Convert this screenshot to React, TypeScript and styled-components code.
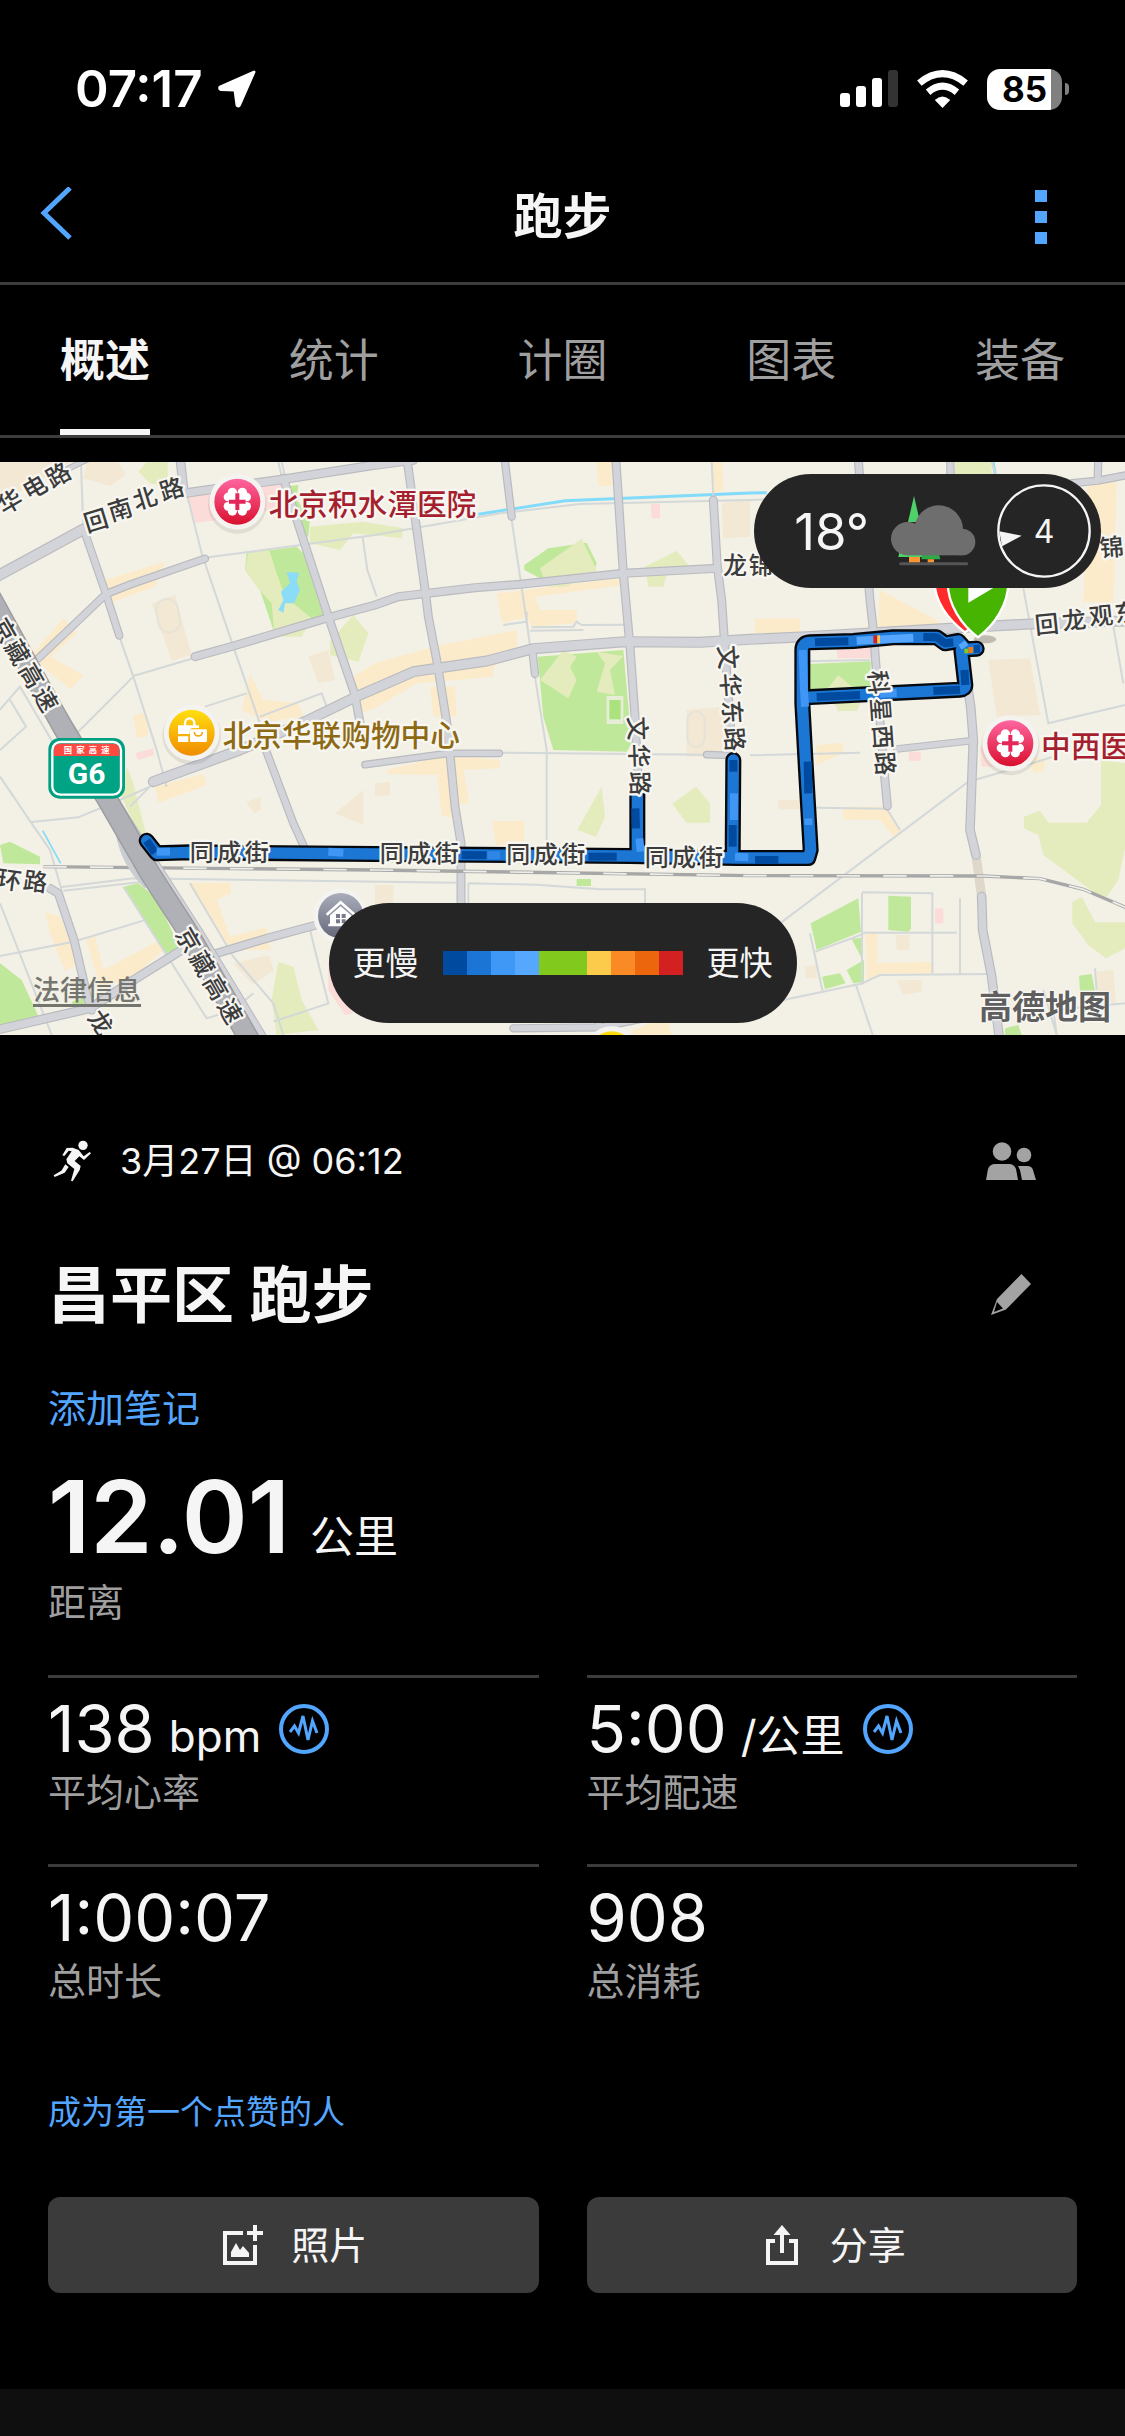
import React from "react";
import styled, { createGlobalStyle } from "styled-components";

const GlobalStyle = createGlobalStyle`
  *, *::before, *::after { box-sizing: border-box; }
  body {
    margin: 0;
    background: #000;
    color: #f5f5f5;
    font-family: Inter, "Noto Sans CJK SC", sans-serif;
  }
  button { font: inherit; color: inherit; background: none; border: 0; padding: 0; cursor: pointer; }
  h1, h2, p, dl, dt, dd { margin: 0; font-weight: inherit; }
  svg { display: block; flex: none; }
`;

const blue = "#53a6ff";
const line = "#3c3c3c";
const muted = "#9f9f9f";

const Page = styled.div`
  min-height: 100vh;
  display: flex;
  flex-direction: column;
`;

/* ---------- status bar ---------- */
const StatusBar = styled.div`
  height: 150px;
  padding: 57px 56px 29px 75px;
  display: flex;
  align-items: center;
  justify-content: space-between;
  color: #fff;
`;
const StatusGroup = styled.div<{ $gap: number }>`
  display: flex;
  align-items: center;
  gap: ${(p) => p.$gap}px;
`;
const Clock = styled.span`
  font-size: 51px;
  font-weight: 600;
  line-height: 64px;
`;
const Battery = styled.span`
  display: flex;
  align-items: center;
  gap: 3px;
  &::after {
    content: "";
    width: 4px;
    height: 12px;
    border-radius: 0 6px 6px 0;
    background: #808080;
  }
`;
const BatteryBody = styled.span<{ $level: number }>`
  width: 75px;
  height: 41px;
  border-radius: 13px;
  background: linear-gradient(90deg, #fff ${(p) => p.$level}%, #808080 ${(p) => p.$level}%);
  color: #000;
  font-size: 35px;
  font-weight: 700;
  line-height: 41px;
  text-align: center;
`;

/* ---------- header and tabs ---------- */
const Header = styled.header`
  display: grid;
  grid-template-columns: 168px 1fr 168px;
  height: 135px;
  border-bottom: 3px solid ${line};
`;
const HeaderButton = styled.button<{ $width: number }>`
  width: ${(p) => p.$width}px;
  display: flex;
  align-items: center;
  justify-content: center;
`;
const HeaderTitle = styled.h1`
  font-size: 49px;
  font-weight: 600;
  line-height: 134px;
  text-align: center;
`;
const Tabs = styled.nav`
  display: flex;
  justify-content: space-between;
  padding: 0 60px;
  margin-bottom: 24px;
  border-bottom: 3px solid ${line};
`;
const Tab = styled.button<{ $active: boolean }>`
  height: 150px;
  padding-top: 2px;
  font-size: 45px;
  line-height: 148px;
  font-weight: ${(p) => (p.$active ? 600 : 400)};
  color: ${(p) => (p.$active ? "#f5f5f5" : muted)};
  box-shadow: ${(p) => (p.$active ? "inset 0 -6px #f5f5f5" : "none")};
`;

/* ---------- map ---------- */
const MapFrame = styled.section`
  position: relative;
  aspect-ratio: 1125 / 573;
  overflow: hidden;
`;
const MapCanvas = styled.svg`
  width: 100%;
  height: 100%;
`;
const WeatherPill = styled.div`
  position: absolute;
  top: 12px;
  right: 24px;
  height: 114px;
  padding: 0 10px 0 40px;
  border-radius: 57px;
  background: #252525;
  display: flex;
  align-items: center;
  gap: 21px;
`;
const Temperature = styled.span`
  font-size: 51px;
`;
const Wind = styled.span`
  display: grid;
  place-items: center;
  font-size: 32px;
  > * { grid-area: 1 / 1; }
`;
const LegendPill = styled.div`
  position: absolute;
  bottom: 12px;
  left: 50%;
  transform: translateX(-50%);
  height: 120px;
  padding: 0 24px;
  border-radius: 60px;
  background: #252525;
  display: flex;
  align-items: center;
  gap: 24px;
  font-size: 33px;
  line-height: 48px;
  white-space: nowrap;
`;
const LegendScale = styled.span`
  display: flex;
`;
const LegendStep = styled.span<{ $color: string }>`
  width: 24px;
  height: 24px;
  background: ${(p) => p.$color};
`;
const LegalLink = styled.a`
  position: absolute;
  left: 33px;
  bottom: 24px;
  font-size: 27px;
  font-weight: 500;
  line-height: 40px;
  color: #75756f;
  text-decoration: underline;
  text-decoration-thickness: 3px;
  text-underline-offset: 4px;
`;
const MapBrand = styled.span`
  position: absolute;
  right: 14px;
  bottom: 8px;
  font-size: 33px;
  line-height: 40px;
  font-weight: 700;
  color: #5f5f5f;
  text-shadow: 0 0 3px #fff, 0 0 3px #fff;
`;

/* ---------- activity details ---------- */
const Details = styled.main`
  padding: 81px 48px 96px;
`;
const InfoRow = styled.div`
  display: flex;
  align-items: center;
  justify-content: space-between;
  height: 90px;
`;
const DateText = styled.p`
  display: flex;
  align-items: center;
  gap: 26px;
  padding-left: 4px;
  font-size: 36px;
  line-height: 48px;
`;
const IconButton = styled.button`
  width: 132px;
  height: 90px;
  display: grid;
  place-items: center;
`;
const TitleRow = styled(InfoRow)`
  margin: 45px 0 43px;
`;
const ActivityName = styled.h2`
  font-size: 62px;
  font-weight: 600;
  line-height: 90px;
`;
const TextLink = styled.a<{ $size: number }>`
  display: block;
  width: fit-content;
  font-size: ${(p) => p.$size}px;
  line-height: 48px;
  color: ${blue};
  text-decoration: none;
`;
const Distance = styled.div`
  margin: 25px 0 48px;
`;
const Value = styled.dd<{ $large?: boolean }>`
  display: flex;
  align-items: center;
  gap: 18px;
  font-size: ${(p) => (p.$large ? 100 : 65)}px;
  font-weight: ${(p) => (p.$large ? 600 : 400)};
  line-height: ${(p) => (p.$large ? 120 : 76)}px;
`;
const Reading = styled.span<{ $gap: number }>`
  display: flex;
  align-items: baseline;
  gap: ${(p) => p.$gap}px;
`;
const Unit = styled.span`
  font-size: 44px;
  font-weight: 400;
  line-height: 60px;
`;
const Caption = styled.dt`
  font-size: 38px;
  line-height: 50px;
  color: ${muted};
`;
const Metrics = styled.div`
  display: grid;
  grid-template-columns: 1fr 1fr;
  column-gap: 48px;
`;
const Metric = styled.dl<{ $ruled?: boolean }>`
  display: flex;
  flex-direction: column-reverse;
  justify-content: flex-end;
  height: ${(p) => (p.$ruled ? "189px" : "auto")};
  padding-top: ${(p) => (p.$ruled ? 13 : 0)}px;
  border-top: ${(p) => (p.$ruled ? `3px solid ${line}` : "0")};
`;
const Actions = styled.div`
  display: grid;
  grid-template-columns: 1fr 1fr;
  column-gap: 48px;
  margin-top: 61px;
`;
const ActionButton = styled.button`
  height: 96px;
  border-radius: 12px;
  background: #3b3b3b;
  display: flex;
  align-items: center;
  justify-content: center;
  gap: 24px;
  font-size: 38px;
  line-height: 48px;
`;
const ActionIcon = styled.span`
  width: 48px;
  display: grid;
  place-items: center;
`;
const Likes = styled.div`
  margin-top: 35px;
`;
const Footer = styled.footer`
  flex: 1;
  min-height: 47px;
  background: #0f0f0f;
`;

/* ---------- icons ---------- */
const LocationIcon = () => (
  <svg width="40" height="40" viewBox="0 0 40 40" fill="#fff" stroke="#fff" strokeWidth="3" strokeLinejoin="round">
    <path d="M37 3 L3 18 Q2 20 4 20.500 L18 21 L20 36 Q21 38 22.500 36Z" />
  </svg>
);
const SignalIcon = () => (
  <svg width="58" height="38" viewBox="0 0 58 38" fill="#fff">
    <rect x="0" y="23" width="10" height="14" rx="3" />
    <rect x="16" y="16" width="10" height="21" rx="3" />
    <rect x="32" y="8" width="10" height="29" rx="3" />
    <rect x="48" y="0" width="10" height="37" rx="3" fill="#333" />
  </svg>
);
const WifiIcon = () => (
  <svg width="51" height="38" viewBox="276 44 152 113" fill="none" stroke="#fff" strokeWidth="21">
    <path d="M283 83 Q352 27 421 83" />
    <path d="M309 110 Q352 74 395 110" />
    <path d="M352 157 L329 133 Q352 112 375 133Z" fill="#fff" stroke="none" />
  </svg>
);
const BackIcon = () => (
  <svg width="32" height="60" viewBox="0 0 32 60" fill="none" stroke={blue} strokeWidth="5">
    <path d="M30 1 L4 26 L30 51" />
  </svg>
);
const MoreIcon = () => (
  <svg width="12" height="54" viewBox="0 0 12 54" fill={blue}>
    <path d="M0 0h12v12H0zM0 21h12v12H0zM0 42h12v12H0z" />
  </svg>
);
const RunnerIcon = () => (
  <svg width="42" height="45" viewBox="38 43 126 135" fill="#f5f5f5">
    <circle cx="131" cy="62" r="14" />
    <path d="M69 92 L82 70 L100 69 L118 76 L133 95 L151 82 L155 86 L134 106 L120 95 L106 109 L124 124 L121 136 L100 170 L95 168 L105 133 L84 116 L81 104 L97 80 L88 78 L75 94Z" />
    <path d="M78 119 L88 127 L76 144 L46 157 L43 152 L66 138Z" />
  </svg>
);
const PeopleIcon = () => (
  <svg width="50" height="38" viewBox="0 0 50 38" fill="#a3a3a3">
    <circle cx="16" cy="9.500" r="9.300" />
    <circle cx="38" cy="13" r="7.300" />
    <path d="M0 38 L2 27 Q4 22 9 22 H23 Q28 22 30 27 L32 38Z" />
    <path d="M32 24 H41 Q46 24 47 28 L50 38 H36 L34 28Z" />
  </svg>
);
const PencilIcon = () => (
  <svg width="40" height="44" viewBox="0 0 40 44" fill="#a3a3a3" fillRule="evenodd">
    <path d="M30.500 0 L40 10 L15 35.500 L0 41 L6 25Z M6 28 L3 38 L12 34.500Z" />
  </svg>
);
const PulseIcon = () => (
  <svg width="50" height="50" viewBox="0 0 50 50" fill="none" stroke={blue}>
    <circle cx="25" cy="25" r="23" strokeWidth="4" />
    <path d="M11 28 L15.500 22 L19.500 29 L24 12 L29 36 L33.500 17 L38 29" strokeWidth="3" />
  </svg>
);
const PhotoIcon = () => (
  <svg width="40" height="40" viewBox="0 0 40 40" fill="none" stroke="#f5f5f5" strokeWidth="4">
    <path d="M20 8 H2 V38 H32 V20 M24 8 H40 M32 0 V16" />
    <path d="M8 32 V27 L13 18 L17 25 L20 21 L26 28 V32Z" fill="#f5f5f5" stroke="none" />
  </svg>
);
const ShareIcon = () => (
  <svg width="32" height="40" viewBox="0 0 32 40" fill="none" stroke="#f5f5f5" strokeWidth="4">
    <path d="M9 16 H2 V38 H30 V16 H23 M16 28 V6" />
    <path d="M16 0 L24.500 10 H7.500Z" fill="#f5f5f5" stroke="none" />
  </svg>
);
const CloudIcon = () => (
  <svg width="86" height="74" viewBox="420 134 258 222">
    <path d="M492 140 L510 218 H474Z" fill="#4fd16a" />
    <path d="M450 300 L445 323 H542 L530 300Z" fill="#4fd16a" />
    <path d="M518 306 L514 330 H571 L565 306Z" fill="#2fa84a" />
    <path d="M477 323h33v17h-33zM533 330h19v10h-19z" fill="#ff9432" />
    <path d="M452 343 H650" stroke="#555" strokeWidth="9" strokeLinecap="round" />
    <g fill="#6e6e6e">
      <circle cx="473" cy="268" r="50" />
      <circle cx="566" cy="241" r="73" />
      <circle cx="636" cy="278" r="40" />
      <rect x="472" y="250" width="164" height="68" />
    </g>
  </svg>
);
const WindDial = () => (
  <svg width="94" height="94" viewBox="741 102 282 282" fill="none">
    <circle cx="882" cy="243" r="137" stroke="#f5f5f5" strokeWidth="7" />
    <path d="M748 244 L815 257 L756 289Z" fill="#f5f5f5" />
  </svg>
);

/* ---------- map data ---------- */
type Road = [d: string, width: number];

const roads: Road[] = [
  ["M540 20 L552 130 L850 88 L1125 45 L1240 30", 24],
  ["M200 58 L262 28", 14],
  ["M-20 385 L250 238", 30],
  ["M250 235 L318 432 L358 557", 20],
  ["M115 625 L205 540 L318 432 L395 402 L615 326", 20],
  ["M850 85 L985 500 L1065 735 L1082 830", 22],
  ["M585 620 L700 588 L985 503 L1125 465 L1195 440 L1425 413 L1560 403 L1870 370 L2150 355", 22],
  ["M460 995 L720 900 L915 815 L1065 742 L1240 665 L1460 633 L1600 596 L1875 575 L2100 577 L2250 568 L2420 560 L2900 532 L3090 522 L3400 512", 28],
  ["M1220 20 L1278 440 L1285 500 L1312 640 L1342 830 L1365 1070 L1383 1180 L1383 1380", 22],
  ["M1095 944 L1345 910 L1498 910", 18],
  ["M1513 20 L1535 200", 20],
  ["M1597 600 L1605 672", 20],
  ["M1847 20 L1870 370 L1890 590 L1905 800 L1915 1000", 22],
  ["M2140 150 L2152 350 L2165 450 L2175 600 L2195 880", 22],
  ["M790 880 L880 1120 L912 1190", 20],
  ["M2120 914 L2190 916", 18],
  ["M2574 20 L2610 450 L2620 540 L2645 880 L2662 1068", 22],
  ["M2850 20 L2852 80", 20],
  ["M3295 20 L3293 92 M3060 115 L3293 92 L3400 72", 20],
  ["M2885 590 L2912 770 L2920 870 L2910 1140 L2928 1215", 24],
  ["M2945 1340 L2948 1440 L2975 1580 L3000 1780", 24],
  ["M2690 897 L2905 873", 18],
  ["M-20 1742 L270 1675 L420 1578 L545 1500", 24],
  ["M650 1510 L800 1465 L960 1422", 22],
  ["M150 1315 L175 1330 L222 1470 L262 1640 L275 1680", 22],
  ["M1540 1735 L1800 1732 L1930 1705 M1795 1690 V1732", 20],
];

const lanes = [
  "M243 40 L250 240 M560 130 L605 310 L700 590 L790 850",
  "M625 322 L1125 255 L1500 190 L1740 162 L2250 150 L2400 144",
  "M358 560 L400 680 L470 900 L500 1010 M400 678 L580 625 M400 680 L230 850",
  "M835 36 L848 90 M845 36 L858 90 M1088 262 L1102 360 L1130 440",
  "M1535 210 L1575 480 L1592 600 L1640 900 V1180",
  "M1510 525 L1580 515 V485 M1595 532 L1720 530 L1730 515 L1745 525 L1880 524 M1590 542 L1750 540",
  "M-10 790 L60 710 L160 880 M30 750 L78 830 L0 900",
  "M0 980 L95 1120 L150 1200 L185 1320 M95 1116 L235 1102 L360 1050 L450 1010 L390 1070",
  "M180 1312 L400 1285 L1370 1298 M190 1322 L430 1295",
  "M0 1518 L220 1475 L430 1412 M0 1360 L155 1755 M370 1310 L620 1705 L700 1680 L760 1630",
  "M570 1300 L700 1520 L820 1660 L850 1755 M820 1715 L985 1660 L930 1440",
  "M1500 908 L2120 914 M1405 1300 L1610 1304 L1800 1318 H1935 V1370 M1405 1300 V1360",
  "M2250 916 L2580 908 M2450 1073 L2660 1076 L2700 1140",
  "M2340 1420 L2905 995 L3080 945 L3160 920",
  "M2586 1330 V1600 L2640 1575 L2960 1572 M2586 1327 L2797 1330 V1570 M2590 1448 H2870 M2880 1345 V1570",
  "M2350 1650 L2590 1600 M2430 1450 L2468 1625 M2446 1505 L2590 1452 M2568 1605 L2618 1755",
  "M3070 415 L3145 820 L3375 765 M3340 530 L3370 700 M3285 1555 L3290 1620 M3130 1620 L3170 1755 L3160 1680 L3375 1660",
  "M2422 634 L2610 630 M2975 36 L3005 130 M2135 36 L2140 140 M615 770 L740 730 M780 800 L965 730 L980 770",
];

type Area = [d: string, color: string];
const sand = "#fcebcb";
const tan = "#f3e8d3";
const grass = "#c0e89a";
const meadow = "#e4ecbd";
const rose = "#fcdcd8";

const areas: Area[] = [
  ["M0 36 H210 L120 90 L0 160Z", tan],
  ["M260 36 H355 L378 75 L330 108 L250 85Z", tan],
  ["M440 36 H503 V110 L450 100 L415 65Z", meadow],
  ["M560 140 L840 95 L860 170 L700 205 L585 218Z", rose],
  ["M870 108 L895 105 L890 150 L930 200 L925 262 L890 230Z", grass],
  ["M930 230 L1090 215 L1210 235 L1205 265 L1060 250 L1020 300 L930 280Z", meadow],
  ["M740 310 L890 290 L910 310 L970 495 L820 540 L780 420 L735 360Z", grass],
  ["M745 308 L808 302 L830 370 L855 440 L935 505 L905 560 L850 560 L822 540 L815 460 L770 410 L735 360Z", meadow],
  ["M1060 495 L1105 550 L1075 635 L990 615 V575Z", meadow],
  ["M315 390 L495 335 L465 410 L340 455Z", sand],
  ["M190 505 L230 550 L150 620 L250 675 L212 718 L130 650 L100 610Z", sand],
  ["M455 460 L525 435 L575 615 L515 632Z", tan],
  ["M925 620 L985 600 L1005 690 L955 700Z", tan],
  ["M1060 680 L1125 640 L1300 590 L1550 540 V600 L1480 650 V680 L1250 700 L1125 775 L1080 790Z", sand],
  ["M725 780 L750 672 L790 750 L895 760 L910 800 L800 815Z", sand],
  ["M400 795 L440 790 L445 855 L410 865Z", sand],
  ["M1490 430 L1860 385 L1870 405 L1605 440 L1620 480 H1730 V520 L1595 530 L1580 500 L1505 520Z", sand],
  ["M1290 710 H1365 L1370 800 L1300 800Z", sand],
  ["M1790 36 H1835 V108 H1795Z", sand],
  ["M2135 36 H2167 L2170 120 L2140 130Z", sand],
  ["M2165 160 L2250 150 V260 L2170 265Z", tan],
  ["M1645 295 L1760 278 L1790 340 L1780 370 L1620 385 L1573 360 V345Z", grass],
  ["M1620 355 L1745 266 L1790 360 L1700 410 L1640 410Z", meadow],
  ["M1935 350 L2030 303 L2065 345 L2000 375 L1990 410 H1945Z", meadow],
  ["M1952 162 H1980 V205 H1955Z", rose],
  ["M1613 620 L1870 600 L1895 880 L1880 905 L1660 900 L1630 800Z", grass],
  ["M1690 600 L1730 620 L1710 650 L1730 690 L1705 745 L1620 690Z", meadow],
  ["M1790 605 L1870 618 L1830 660 L1845 735 L1790 725 L1815 640Z", meadow],
  ["M1820 738 H1870 V822 H1820Z", "#e8edd8"],
  ["M1828 750 H1862 V808 H1828Z", "#aae37e"],
  ["M2060 780 L2180 770 V920 H2060Z", tan],
  ["M2865 36 H2975 V105 H2865Z", meadow],
  ["M3260 95 H3350 L3340 460 L3250 455 L3260 250Z", sand],
  ["M2640 420 L2800 505 L2830 525 L2632 540Z", sand],
  ["M2265 505 H2400 V550 H2265Z", sand],
  ["M2510 595 L2612 585 L2615 625 H2513Z", rose],
  ["M2425 642 L2612 634 V720 H2425Z", grass],
  ["M2515 675 L2590 740 L2570 783 H2515 L2480 720Z", meadow],
  ["M2965 630 L3090 625 L3120 795 L2990 800Z", tan],
  ["M2940 890 H3000 V950 H2945Z", rose],
  ["M3090 920 L3135 930 L3130 965 L3100 970Z", sand],
  ["M365 1040 L380 950 L400 1000 L440 1160 L420 1160Z", meadow],
  ["M465 1010 L610 972 L620 1005 L475 1058Z", sand],
  ["M405 910 L460 895 L462 915 L415 930Z", rose],
  ["M738 1055 L782 1042 V1080 L762 1090Z", tan],
  ["M1005 1090 L1090 1020 V1125Z", tan],
  ["M1160 960 L1345 915 L1500 930 V955 L1390 960 L1408 1060 H1382 L1360 1105 L1325 1095 L1312 975 L1165 972Z", sand],
  ["M1477 1113 H1572 V1185 H1487Z", sand],
  ["M1125 1000 L1170 995 V1035 L1125 1040Z", tan],
  ["M1805 1010 L1815 1100 L1788 1160 L1732 1140Z", meadow],
  ["M2088 1010 L2130 1060 V1118 H2060 L2017 1062Z", meadow],
  ["M1730 1287 H1773 V1308 H1730Z", grass],
  ["M2450 885 L2530 878 V910 L2450 945Z", sand],
  ["M2530 1070 H2660 L2700 1140 L2685 1165 L2640 1110 L2530 1108Z", sand],
  ["M2335 1050 H2400 V1078 H2335Z", tan],
  ["M2725 905 H2762 V932 H2727Z", rose],
  ["M3303 930 L3375 940 V1195 L3355 1290 L3320 1340 L3285 1330 L3130 1215 L3115 1155 L3072 1135 V1100 L3120 1082 L3145 1118 H3260 L3303 1065Z", meadow],
  ["M3245 1340 L3285 1417 H3375 V1495 L3318 1525 L3265 1485 L3217 1420 V1357Z", meadow],
  ["M2432 1420 L2575 1345 L2583 1445 L2450 1500Z", grass],
  ["M2665 1337 L2733 1340 V1435 L2725 1445 L2665 1440Z", grass],
  ["M2555 1467 L2585 1463 V1525Z M2466 1580 L2520 1570 L2537 1600 L2475 1618Z M2540 1560 L2592 1530 V1595 L2560 1600Z", grass],
  ["M2597 1450 H2632 V1540 L2800 1535 V1570 H2650 L2600 1595Z", sand],
  ["M2805 1375 H2830 V1420 H2805Z", rose],
  ["M2415 1550 L2450 1545 V1585 H2418Z M2688 1455 H2728 V1500 H2690Z M2690 1590 H2765 V1625 L2710 1635Z", tan],
  ["M3237 1577 L3275 1572 L3285 1622 H3240Z M3015 1735 L3055 1725 L3065 1755 H3015Z", grass],
  ["M3290 1565 L3340 1560 L3348 1660 L3295 1655Z", tan],
  ["M0 1185 L30 1175 L120 1220 V1243 L10 1240Z", grass],
  ["M0 1540 L65 1590 L118 1705 L0 1730Z", grass],
  ["M372 1310 L415 1300 L470 1345 L540 1495 L495 1512Z", grass],
  ["M215 1655 L260 1640 L250 1680 H225Z", grass],
  ["M135 1385 L180 1400 L235 1540 L195 1562 L150 1450Z", sand],
  ["M258 1468 L285 1460 L310 1560 L470 1475 L490 1500 L400 1580 L300 1610Z", sand],
  ["M565 1298 H693 V1330 L650 1350 L690 1460 L800 1432 L812 1500 L690 1500Z", sand],
  ["M700 1540 L805 1515 L822 1560 L760 1605Z", tan],
  ["M835 1535 L880 1550 L905 1650 L955 1740 L830 1755 L815 1650Z", meadow],
  ["M985 1540 H1020 L1060 1690 L1035 1695 L985 1620Z", rose],
  ["M1125 1305 H1180 V1365 H1125Z", tan],
  ["M1900 1740 L2000 1700 L2015 1755 H1890Z", sand],
];

type Label = { text: string; at: [number, number][]; angle: number };
const labels: Label[] = [
  { text: "华电路", at: [[30, 155], [105, 112], [175, 75]], angle: -30 },
  { text: "回南北路", at: [[288, 212], [360, 178], [435, 145], [515, 118]], angle: -17 },
  { text: "京藏高速", at: [[12, 542], [52, 607], [95, 677], [137, 748]], angle: 60 },
  { text: "京藏高速", at: [[565, 1470], [606, 1541], [648, 1613], [690, 1684]], angle: 60 },
  { text: "龙", at: [[302, 1718]], angle: 55 },
  { text: "环路", at: [[28, 1290], [106, 1295]], angle: 8 },
  { text: "同成街", at: [[605, 1207], [688, 1207], [770, 1207]], angle: 0 },
  { text: "同成街", at: [[1175, 1211], [1257, 1211], [1340, 1211]], angle: 0 },
  { text: "同成街", at: [[1555, 1214], [1637, 1214], [1720, 1214]], angle: 0 },
  { text: "同成街", at: [[1970, 1221], [2052, 1221], [2133, 1221]], angle: 0 },
  { text: "文华路", at: [[1912, 835], [1917, 917], [1920, 1000]], angle: 88 },
  { text: "文华东路", at: [[2183, 622], [2191, 705], [2197, 787], [2203, 867]], angle: 86 },
  { text: "科星西路", at: [[2635, 697], [2642, 780], [2648, 860], [2655, 940]], angle: 86 },
  { text: "回龙观东", at: [[3140, 523], [3222, 510], [3303, 498], [3380, 488]], angle: -6 },
  { text: "龙锦", at: [[2205, 345], [2282, 345]], angle: 0 },
  { text: "锦", at: [[3335, 292]], angle: -5 },
];

/* Glyph centres are projected onto the label's own rotated baseline. */
const RoadLabel = ({ text, at, angle }: Label) => {
  const [ox, oy] = at[0];
  const rad = (angle * Math.PI) / 180;
  const xs = at.map(([x, y]) => Math.round((x - ox) * Math.cos(rad) + (y - oy) * Math.sin(rad)));
  const ys = at.map(([x, y]) => Math.round((y - oy) * Math.cos(rad) - (x - ox) * Math.sin(rad)) + 26);
  return (
    <text transform={`translate(${ox} ${oy}) rotate(${angle})`} x={xs.join(" ")} y={ys.join(" ")} textAnchor="middle">
      {text}
    </text>
  );
};

const Hospital = ({ x, y }: { x: number; y: number }) => (
  <g transform={`translate(${x} ${y})`}>
    <circle cy="8" r="88" fill="#000" opacity="0.08" />
    <circle r="84" fill="#f5f3ef" />
    <circle r="69" fill="url(#pink)" />
    <g fill="#fff">
      <circle cx="-15" cy="-28" r="14" />
      <circle cx="15" cy="-28" r="14" />
      <circle cx="-15" cy="28" r="14" />
      <circle cx="15" cy="28" r="14" />
      <circle cx="-28" cy="-14" r="13" />
      <circle cx="-28" cy="14" r="13" />
      <circle cx="28" cy="-14" r="13" />
      <circle cx="28" cy="14" r="13" />
      <rect x="-26" y="-26" width="52" height="52" />
    </g>
    <path d="M-6 -25h12v19h19v12h-19v19h-12v-19h-19v-12h19z" fill="#e5265a" />
  </g>
);

const route = [
  "M440 1172 L470 1210 L570 1207 L1125 1212 L1890 1218 L2210 1224 L2425 1224 L2432 1200 L2418 960 L2407 760 V600 Q2407 578 2430 577 L2560 573 L2680 562 L2810 562 L2835 580 L2875 573 L2897 598 L2930 596",
  "M2884 600 L2896 705 Q2896 718 2880 719 L2415 742",
  "M1912 1020 V1215",
  "M2200 930 L2198 1215",
];
const pace: [d: string, color: string][] = [
  ["M440 1172 L465 1208", "#004b9f"],
  ["M470 1205 L510 1205", "#3f96f4"],
  ["M985 1205 L1030 1208", "#3f96f4"],
  ["M1385 1215 L1460 1216", "#004b9f"],
  ["M1462 1216 L1500 1216", "#2f86e6"],
  ["M1765 1220 L1850 1220", "#004b9f"],
  ["M1906 1075 L1908 1135", "#004b9f"],
  ["M1918 1165 L1922 1205", "#3f96f4"],
  ["M2198 1125 L2198 1190", "#004b9f"],
  ["M2202 1030 L2202 1110", "#3f96f4"],
  ["M2200 930 L2200 965", "#004b9f"],
  ["M2205 1220 L2245 1222", "#3f96f4"],
  ["M2265 1230 L2335 1230", "#004b9f"],
  ["M2425 1105 L2425 1125", "#3f96f4"],
  ["M2423 935 L2425 1030", "#004b9f"],
  ["M2415 770 L2412 720 L2408 600", "#3f96f4"],
  ["M2445 577 L2545 574", "#004b9f"],
  ["M2570 572 L2740 563", "#56a6ff"],
  ["M2770 561 L2810 562 L2835 580 L2860 577", "#004b9f"],
  ["M2450 741 L2580 735", "#004b9f"],
  ["M2640 731 L2690 729", "#3f96f4"],
  ["M2800 723 L2880 719", "#004b9f"],
  ["M2893 660 L2896 705", "#004b9f"],
  ["M2885 578 L2895 592", "#56a6ff"],
  ["M2922 597 L2940 596", "#004b9f"],
];

const ActivityMap = () => (
  <MapCanvas viewBox="0 36 3375 1719" preserveAspectRatio="xMidYMid slice" role="img" aria-label="跑步路线">
    <defs>
      <linearGradient id="pink" x2="0" y2="1">
        <stop stopColor="#ff65a0" />
        <stop offset="1" stopColor="#d9102e" />
      </linearGradient>
      <linearGradient id="amber" x2="0" y2="1">
        <stop stopColor="#ffdf10" />
        <stop offset="1" stopColor="#f08c00" />
      </linearGradient>
      <linearGradient id="slate" x2="0" y2="1">
        <stop stopColor="#a9adbb" />
        <stop offset="1" stopColor="#656979" />
      </linearGradient>
    </defs>
    <rect y="36" width="3375" height="1719" fill="#f3f0e5" />
    {areas.map(([d, color]) => (
      <path key={d} d={d} fill={color} />
    ))}
    <path d="M860 366 L897 368 L890 395 L900 420 L882 460 L855 460 L850 488 L835 480 L850 450 L843 425 L870 400Z" fill="#8adcf7" />
    <g fill="none" stroke="#82dbfa" strokeWidth="9">
      <path d="M1435 193 L1695 152 L2250 129 L2300 128" />
      <path d="M128 1142 L182 1240" strokeWidth="5" />
      <path d="M2978 30 L2986 75" />
    </g>
    <g fill="none" stroke="#e6e3d8" strokeWidth="6">
      <rect x="472" y="447" width="65" height="100" rx="32" transform="rotate(-10 505 497)" />
      <rect x="2062" y="785" width="52" height="105" rx="26" />
    </g>
    <g fill="none" stroke="#d3d8d8" strokeWidth="6">
      {lanes.map((d) => (
        <path key={d} d={d} />
      ))}
    </g>
    <path d="M2928 1215 L2945 1340" stroke="#ded7ca" strokeWidth="28" />
    <g fill="none" strokeLinecap="round" strokeLinejoin="round">
      {roads.map(([d, w]) => (
        <path key={d} d={d} stroke="#b9bbbf" strokeWidth={w + 5} />
      ))}
      {roads.map(([d, w]) => (
        <path key={d} d={d} stroke="#d2d4d9" strokeWidth={w - 2} />
      ))}
    </g>
    <g fill="none">
      <path d="M130 1250 L1125 1260 L2250 1277 L2950 1278 L3120 1286 L3250 1318 L3400 1382" stroke="#a7a7a7" strokeWidth="10" />
      <path d="M130 1250 L1125 1260 L2250 1277 L2950 1278 L3120 1286 L3250 1318 L3400 1382" stroke="#eeeeea" strokeWidth="5" strokeDasharray="70 70" />
      <path d="M-30 430 L340 1045 L600 1450 L800 1780" stroke="#b9bbbf" strokeWidth="26" />
      <path d="M-30 430 L340 1045 L600 1450 L800 1780" stroke="#d2d4d9" strokeWidth="20" />
      <path d="M355 1150 Q370 1240 440 1310" stroke="#c9ccd1" strokeWidth="16" />
      <path d="M-40 420 L190 835 L320 1045 L450 1270 L560 1440 L760 1790" stroke="#9a9b9f" strokeWidth="64" />
      <path d="M-40 420 L190 835 L320 1045 L450 1270 L560 1440 L760 1790" stroke="#b0b1b6" strokeWidth="56" />
    </g>
    <g fill="none" stroke="#05080d" strokeWidth="48" strokeLinecap="round" strokeLinejoin="round">
      {route.map((d) => (
        <path key={d} d={d} />
      ))}
    </g>
    <g fill="none" stroke="#1b76d4" strokeWidth="34" strokeLinecap="round" strokeLinejoin="round">
      {route.map((d) => (
        <path key={d} d={d} />
      ))}
    </g>
    <g fill="none" strokeWidth="24" strokeLinejoin="round">
      {pace.map(([d, color]) => (
        <path key={d} d={d} stroke={color} />
      ))}
      <path d="M2620 568 h12" stroke="#d42020" />
      <path d="M2632 568 h8" stroke="#fccb4b" />
      <path d="M2893 603 h12" stroke="#80c91e" strokeWidth="14" />
      <path d="M2905 600 h14" stroke="#ee7a18" strokeWidth="18" />
    </g>
    <ellipse cx="2955" cy="568" rx="34" ry="12" fill="#000" opacity="0.22" />
    <g stroke="#fff" strokeWidth="7" strokeLinejoin="round">
      <path d="M2895 547 C2845 510 2803 455 2803 390 C2803 330 2850 300 2895 300 C2950 300 2985 340 2985 390 C2985 455 2945 510 2895 547Z" fill="#ff2a2a" />
      <path d="M2934 562 C2885 525 2843 465 2843 395 C2843 335 2885 300 2934 300 C2985 300 3025 335 3025 395 C3025 465 2983 525 2934 562Z" fill="#46b400" />
      <path d="M2905 458 V350 L2995 405Z" fill="#fff" stroke="none" />
    </g>
    <g fontSize="72" fontWeight="500" fill="#3c3c3c" stroke="#f7f6f1" strokeWidth="14" strokeLinejoin="round" style={{ paintOrder: "stroke" }}>
      {labels.map((l, i) => (
        <RoadLabel key={i} {...l} />
      ))}
    </g>
    <Hospital x={712} y={155} />
    <Hospital x={3031} y={880} />
    <g transform="translate(575 848)">
      <circle cy="8" r="88" fill="#000" opacity="0.08" />
      <circle r="84" fill="#f5f3ef" />
      <circle r="69" fill="url(#amber)" />
      <path d="M-41 -22 H22 V-14 H4 Q-6 -14 -6 -2 V4 H-41Z M-41 11 H-10 V28 H-41Z" fill="#fff" />
      <path d="M-20 -20 V-28 a13 14 0 0 1 28 0 V-20" fill="none" stroke="#fff" strokeWidth="7" />
      <rect x="-5" y="-10" width="51" height="38" rx="4" fill="#fff" />
      <path d="M8 -2 a12 12 0 0 0 24 0" fill="none" stroke="#f5a300" strokeWidth="5" />
    </g>
    <g transform="translate(1835 1813)">
      <circle r="84" fill="#f5f3ef" />
      <circle r="69" fill="url(#amber)" />
    </g>
    <g transform="translate(1022 1397)">
      <circle r="82" fill="#f5f3ef" />
      <circle r="68" fill="url(#slate)" />
      <path d="M-42 -3 L0 -40 L42 -3" fill="none" stroke="#fff" strokeWidth="8" />
      <path d="M-32 -1 L0 -28 L32 -1 V30 H-32Z M-37 24 H37 V32 H-37Z" fill="#fff" />
      <path d="M-14 -5h12v12h-12z M3 -5h12v12h-12z M-14 11h12v12h-12z M3 11h12v12h-12z" fill="#777b8b" />
    </g>
    <g fontSize="89" fontWeight="500" stroke="#f7f6f1" strokeWidth="14" strokeLinejoin="round" style={{ paintOrder: "stroke" }}>
      <text x="806" y="194" fill="#a51f2e">北京积水潭医院</text>
      <text x="668" y="888" fill="#8c6912">北京华联购物中心</text>
      <text x="3123" y="921" fill="#a51f2e">中西医</text>
    </g>
    <g>
      <rect x="145" y="864" width="230" height="182" rx="34" fill="#009f80" />
      <rect x="157" y="876" width="206" height="158" rx="24" fill="#00a383" stroke="#fff" strokeWidth="7" />
      <path d="M162 918 V900 Q162 881 181 881 H339 Q358 881 358 900 V918Z" fill="#ff4a42" />
      <text x="204 241 279 316" y="909" fontSize="25" fontWeight="700" fill="#fff" textAnchor="middle">国家高速</text>
      <text x="260" y="1001" fontSize="90" fontWeight="700" fontFamily="Roboto, sans-serif" fill="#fff" textAnchor="middle">G6</text>
    </g>
  </MapCanvas>
);

const legend = ["#004b9f", "#1a75d4", "#3f98f5", "#56a8ff", "#82c91e", "#82c91e", "#fdcb4b", "#fa8a26", "#eb660c", "#d32020"];
const tabs = ["概述", "统计", "计圈", "图表", "装备"];
const metrics = [
  { label: "平均心率", value: "138", unit: "bpm", pulse: true },
  { label: "平均配速", value: "5:00", unit: "/公里", pulse: true },
  { label: "总时长", value: "1:00:07" },
  { label: "总消耗", value: "908" },
];

export default function App() {
  const [tab, setTab] = React.useState(tabs[0]);
  return (
    <Page>
      <GlobalStyle />
      <StatusBar>
        <StatusGroup $gap={14}>
          <Clock>07:17</Clock>
          <LocationIcon />
        </StatusGroup>
        <StatusGroup $gap={19}>
          <SignalIcon />
          <WifiIcon />
          <Battery>
            <BatteryBody $level={85}>85</BatteryBody>
          </Battery>
        </StatusGroup>
      </StatusBar>
      <Header>
        <HeaderButton $width={112} aria-label="返回">
          <BackIcon />
        </HeaderButton>
        <HeaderTitle>跑步</HeaderTitle>
        <HeaderButton $width={168} aria-label="更多">
          <MoreIcon />
        </HeaderButton>
      </Header>
      <Tabs>
        {tabs.map((name) => (
          <Tab key={name} $active={name === tab} onClick={() => setTab(name)}>
            {name}
          </Tab>
        ))}
      </Tabs>
      <MapFrame>
        <ActivityMap />
        <LegalLink href="#legal">法律信息</LegalLink>
        <MapBrand>高德地图</MapBrand>
        <WeatherPill>
          <Temperature>18°</Temperature>
          <CloudIcon />
          <Wind>
            <WindDial />
            <span>4</span>
          </Wind>
        </WeatherPill>
        <LegendPill>
          <span>更慢</span>
          <LegendScale>
            {legend.map((color, i) => (
              <LegendStep key={i} $color={color} />
            ))}
          </LegendScale>
          <span>更快</span>
        </LegendPill>
      </MapFrame>
      <Details>
        <InfoRow>
          <DateText>
            <RunnerIcon />
            3月27日 @ 06:12
          </DateText>
          <IconButton aria-label="隐私">
            <PeopleIcon />
          </IconButton>
        </InfoRow>
        <TitleRow>
          <ActivityName>昌平区 跑步</ActivityName>
          <IconButton aria-label="编辑">
            <PencilIcon />
          </IconButton>
        </TitleRow>
        <TextLink href="#note" $size={38}>添加笔记</TextLink>
        <Distance>
          <Metric>
            <Caption>距离</Caption>
            <Value $large>
              <Reading $gap={20}>
                12.01 <Unit>公里</Unit>
              </Reading>
            </Value>
          </Metric>
        </Distance>
        <Metrics>
          {metrics.map((m) => (
            <Metric key={m.label} $ruled>
              <Caption>{m.label}</Caption>
              <Value>
                <Reading $gap={14}>
                  {m.value}
                  {m.unit && <Unit>{m.unit}</Unit>}
                </Reading>
                {m.pulse && <PulseIcon />}
              </Value>
            </Metric>
          ))}
        </Metrics>
        <Likes>
          <TextLink href="#like" $size={33}>成为第一个点赞的人</TextLink>
        </Likes>
        <Actions>
          <ActionButton>
            <ActionIcon><PhotoIcon /></ActionIcon>
            照片
          </ActionButton>
          <ActionButton>
            <ActionIcon><ShareIcon /></ActionIcon>
            分享
          </ActionButton>
        </Actions>
      </Details>
      <Footer />
    </Page>
  );
}
